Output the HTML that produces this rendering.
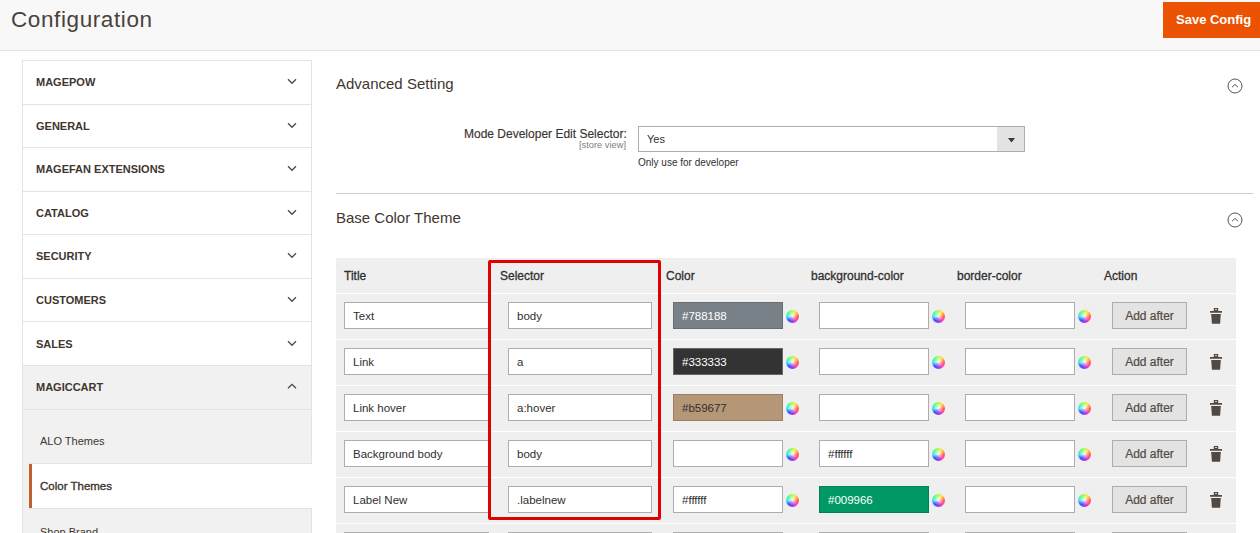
<!DOCTYPE html>
<html><head><meta charset="utf-8">
<style>
*{box-sizing:border-box;margin:0;padding:0}
html,body{width:1260px;height:533px;overflow:hidden;background:#fff;font-family:"Liberation Sans",sans-serif;color:#41362f}
body{position:relative}
.a{position:absolute;white-space:nowrap}
#hdr{left:0;top:0;width:1260px;height:51px;background:#f8f8f8;border-bottom:1px solid #e3e3e3}
#ttl{left:11px;top:6px;font-size:22.5px;line-height:28px;color:#4a423c;letter-spacing:0.6px}
#save{left:1163px;top:2px;width:110px;height:36px;background:#eb5202;color:#fff;font-weight:bold;font-size:13px;line-height:36px;padding-left:13px}
#side{left:22px;top:60px;width:290px;height:480px;border:1px solid #e3e3e3;border-bottom:none}
.sep{height:1px;background:#e3e3e3}
.st{left:36px;font-weight:bold;font-size:11px;line-height:12px;color:#41362f}
.sub{left:40px;font-size:11px;line-height:12px;color:#41362f}
.h2{left:336px;font-size:15px;line-height:18px;color:#41362f}
.inp{background:#fff;border:1px solid #adadad;height:27px;font-size:11.5px;line-height:27px;padding-left:8px;color:#303030;overflow:hidden}
.wh{width:13px;height:13px;border-radius:50%;background:radial-gradient(circle at 50% 45%,rgba(255,255,255,.9) 0,rgba(255,255,255,0) 55%,rgba(0,0,0,0) 72%,rgba(70,0,70,.35) 100%),conic-gradient(#a8ff40,#ffe040 30deg,#ff6040 90deg,#ff40c0 135deg,#9040e0 180deg,#4050ff 225deg,#40e0ff 270deg,#40ff80 315deg,#a8ff40 360deg)}
.th{font-weight:normal;-webkit-text-stroke:0.3px #303030;font-size:12px;line-height:12px;color:#303030}
.btn{width:75px;height:27px;background:#e3e3e3;border:1px solid #adadad;font-size:12px;line-height:27px;text-align:center;color:#514943;-webkit-text-stroke:0.2px #514943}
</style></head><body>
<div id="hdr" class="a"></div>
<div id="ttl" class="a">Configuration</div>
<div id="save" class="a">Save Config</div>
<div id="side" class="a"></div>
<div class="a" style="left:23px;top:366px;width:288px;height:200px;background:#f1f1f1"></div>
<div class="a sep" style="left:23px;top:104px;width:288px"></div>
<div class="a sep" style="left:23px;top:147px;width:288px"></div>
<div class="a sep" style="left:23px;top:191px;width:288px"></div>
<div class="a sep" style="left:23px;top:234px;width:288px"></div>
<div class="a sep" style="left:23px;top:278px;width:288px"></div>
<div class="a sep" style="left:23px;top:321px;width:288px"></div>
<div class="a sep" style="left:23px;top:365px;width:288px"></div>
<div class="a st" style="top:76px">MAGEPOW</div>
<svg class="a" style="left:287px;top:78px" width="10" height="7" viewBox="0 0 10 7"><path d="M1 1.3 L5 5.3 L9 1.3" fill="none" stroke="#514943" stroke-width="1.3"/></svg>
<div class="a st" style="top:120px">GENERAL</div>
<svg class="a" style="left:287px;top:122px" width="10" height="7" viewBox="0 0 10 7"><path d="M1 1.3 L5 5.3 L9 1.3" fill="none" stroke="#514943" stroke-width="1.3"/></svg>
<div class="a st" style="top:163px">MAGEFAN EXTENSIONS</div>
<svg class="a" style="left:287px;top:165px" width="10" height="7" viewBox="0 0 10 7"><path d="M1 1.3 L5 5.3 L9 1.3" fill="none" stroke="#514943" stroke-width="1.3"/></svg>
<div class="a st" style="top:207px">CATALOG</div>
<svg class="a" style="left:287px;top:209px" width="10" height="7" viewBox="0 0 10 7"><path d="M1 1.3 L5 5.3 L9 1.3" fill="none" stroke="#514943" stroke-width="1.3"/></svg>
<div class="a st" style="top:250px">SECURITY</div>
<svg class="a" style="left:287px;top:252px" width="10" height="7" viewBox="0 0 10 7"><path d="M1 1.3 L5 5.3 L9 1.3" fill="none" stroke="#514943" stroke-width="1.3"/></svg>
<div class="a st" style="top:294px">CUSTOMERS</div>
<svg class="a" style="left:287px;top:296px" width="10" height="7" viewBox="0 0 10 7"><path d="M1 1.3 L5 5.3 L9 1.3" fill="none" stroke="#514943" stroke-width="1.3"/></svg>
<div class="a st" style="top:338px">SALES</div>
<svg class="a" style="left:287px;top:340px" width="10" height="7" viewBox="0 0 10 7"><path d="M1 1.3 L5 5.3 L9 1.3" fill="none" stroke="#514943" stroke-width="1.3"/></svg>
<div class="a st" style="top:381px">MAGICCART</div>
<svg class="a" style="left:287px;top:383px" width="10" height="7" viewBox="0 0 10 7"><path d="M1 5.3 L5 1.3 L9 5.3" fill="none" stroke="#514943" stroke-width="1.3"/></svg>
<div class="a sep" style="left:24px;top:409px;width:287px"></div>
<div class="a sub" style="top:435px">ALO Themes</div>
<div class="a sep" style="left:29px;top:463px;width:282px"></div>
<div class="a" style="left:29px;top:464px;width:283px;height:44px;background:#fff;border-left:3px solid #c0602e"></div>
<div class="a sub" style="top:480px;-webkit-text-stroke:0.35px #41362f;font-size:11.5px">Color Themes</div>
<div class="a sep" style="left:29px;top:508px;width:282px"></div>
<div class="a sub" style="top:526px">Shop Brand</div>
<div class="a h2" style="top:75px">Advanced Setting</div>
<svg class="a" style="left:1227px;top:78px" width="16" height="16" viewBox="0 0 16 16"><circle cx="8" cy="8" r="7" fill="none" stroke="#555" stroke-width="1"/><path d="M5 9.2 L8 6.4 L11 9.2" fill="none" stroke="#555" stroke-width="1"/></svg>
<div class="a lbl" style="left:464px;top:127px;width:162px;text-align:right;font-size:12px;line-height:14px;color:#3a3330;-webkit-text-stroke:0.15px #3a3330">Mode Developer Edit Selector:</div>
<div class="a" style="left:560px;top:140px;width:66px;text-align:right;font-size:9.3px;line-height:10px;color:#808080">[store view]</div>
<div class="a" style="left:638px;top:126px;width:387px;height:26px;border:1px solid #adadad;background:#fff"></div>
<div class="a" style="left:997px;top:127px;width:27px;height:24px;background:#e3e3e3"></div>
<svg class="a" style="left:1008px;top:138px" width="8" height="5" viewBox="0 0 8 5"><path d="M0 0 L7 0 L3.5 4.6 Z" fill="#41362f"/></svg>
<div class="a" style="left:647px;top:132px;font-size:11px;line-height:14px;color:#303030">Yes</div>
<div class="a" style="left:638px;top:157px;font-size:10px;line-height:12px;color:#303030">Only use for developer</div>
<div class="a" style="left:336px;top:193px;width:917px;height:1px;background:#cccccc"></div>
<div class="a h2" style="top:209px">Base Color Theme</div>
<svg class="a" style="left:1227px;top:212px" width="16" height="16" viewBox="0 0 16 16"><circle cx="8" cy="8" r="7" fill="none" stroke="#555" stroke-width="1"/><path d="M5 9.2 L8 6.4 L11 9.2" fill="none" stroke="#555" stroke-width="1"/></svg>
<div class="a" style="left:336px;top:258px;width:900px;height:290px;background:#efefef"></div>
<div class="a th" style="left:344px;top:270px">Title</div>
<div class="a th" style="left:500px;top:270px">Selector</div>
<div class="a th" style="left:666px;top:270px">Color</div>
<div class="a th" style="left:811px;top:270px">background-color</div>
<div class="a th" style="left:957px;top:270px">border-color</div>
<div class="a th" style="left:1104px;top:270px">Action</div>
<div class="a" style="left:336px;top:293px;width:900px;height:1px;background:#fff"></div>
<div class="a inp" style="left:344px;top:302px;width:145px">Text</div>
<div class="a inp" style="left:508px;top:302px;width:144px">body</div>
<div class="a inp" style="left:673px;top:302px;width:110px;background:#788188;color:#fff;border-color:rgba(0,0,0,.15)">#788188</div>
<div class="a wh" style="left:786px;top:310px"></div>
<div class="a inp" style="left:819px;top:302px;width:110px"></div>
<div class="a wh" style="left:932px;top:310px"></div>
<div class="a inp" style="left:965px;top:302px;width:110px"></div>
<div class="a wh" style="left:1078px;top:310px"></div>
<div class="a btn" style="left:1112px;top:302px">Add after</div>
<svg class="a" style="left:1210px;top:308px" width="12" height="16" viewBox="0 0 12 16"><path d="M3.8 0 H8.2 V3 H12 V4.8 H0 V3 H3.8 Z M5.2 1 V2 H6.8 V1 Z" fill="#514943" fill-rule="evenodd"/><path d="M1.2 6 H10.8 L10.1 15.8 H1.9 Z" fill="#514943"/></svg>
<div class="a" style="left:336px;top:339px;width:900px;height:1px;background:#fff"></div>
<div class="a inp" style="left:344px;top:348px;width:145px">Link</div>
<div class="a inp" style="left:508px;top:348px;width:144px">a</div>
<div class="a inp" style="left:673px;top:348px;width:110px;background:#333333;color:#fff;border-color:#666">#333333</div>
<div class="a wh" style="left:786px;top:356px"></div>
<div class="a inp" style="left:819px;top:348px;width:110px"></div>
<div class="a wh" style="left:932px;top:356px"></div>
<div class="a inp" style="left:965px;top:348px;width:110px"></div>
<div class="a wh" style="left:1078px;top:356px"></div>
<div class="a btn" style="left:1112px;top:348px">Add after</div>
<svg class="a" style="left:1210px;top:354px" width="12" height="16" viewBox="0 0 12 16"><path d="M3.8 0 H8.2 V3 H12 V4.8 H0 V3 H3.8 Z M5.2 1 V2 H6.8 V1 Z" fill="#514943" fill-rule="evenodd"/><path d="M1.2 6 H10.8 L10.1 15.8 H1.9 Z" fill="#514943"/></svg>
<div class="a" style="left:336px;top:385px;width:900px;height:1px;background:#fff"></div>
<div class="a inp" style="left:344px;top:394px;width:145px">Link hover</div>
<div class="a inp" style="left:508px;top:394px;width:144px">a:hover</div>
<div class="a inp" style="left:673px;top:394px;width:110px;background:#b59677;color:#303030;border-color:rgba(0,0,0,.15)">#b59677</div>
<div class="a wh" style="left:786px;top:402px"></div>
<div class="a inp" style="left:819px;top:394px;width:110px"></div>
<div class="a wh" style="left:932px;top:402px"></div>
<div class="a inp" style="left:965px;top:394px;width:110px"></div>
<div class="a wh" style="left:1078px;top:402px"></div>
<div class="a btn" style="left:1112px;top:394px">Add after</div>
<svg class="a" style="left:1210px;top:400px" width="12" height="16" viewBox="0 0 12 16"><path d="M3.8 0 H8.2 V3 H12 V4.8 H0 V3 H3.8 Z M5.2 1 V2 H6.8 V1 Z" fill="#514943" fill-rule="evenodd"/><path d="M1.2 6 H10.8 L10.1 15.8 H1.9 Z" fill="#514943"/></svg>
<div class="a" style="left:336px;top:431px;width:900px;height:1px;background:#fff"></div>
<div class="a inp" style="left:344px;top:440px;width:145px">Background body</div>
<div class="a inp" style="left:508px;top:440px;width:144px">body</div>
<div class="a inp" style="left:673px;top:440px;width:110px"></div>
<div class="a wh" style="left:786px;top:448px"></div>
<div class="a inp" style="left:819px;top:440px;width:110px;background:#fff;color:#303030;border-color:#adadad">#ffffff</div>
<div class="a wh" style="left:932px;top:448px"></div>
<div class="a inp" style="left:965px;top:440px;width:110px"></div>
<div class="a wh" style="left:1078px;top:448px"></div>
<div class="a btn" style="left:1112px;top:440px">Add after</div>
<svg class="a" style="left:1210px;top:446px" width="12" height="16" viewBox="0 0 12 16"><path d="M3.8 0 H8.2 V3 H12 V4.8 H0 V3 H3.8 Z M5.2 1 V2 H6.8 V1 Z" fill="#514943" fill-rule="evenodd"/><path d="M1.2 6 H10.8 L10.1 15.8 H1.9 Z" fill="#514943"/></svg>
<div class="a" style="left:336px;top:477px;width:900px;height:1px;background:#fff"></div>
<div class="a inp" style="left:344px;top:486px;width:145px">Label New</div>
<div class="a inp" style="left:508px;top:486px;width:144px">.labelnew</div>
<div class="a inp" style="left:673px;top:486px;width:110px;background:#fff;color:#303030;border-color:#adadad">#ffffff</div>
<div class="a wh" style="left:786px;top:494px"></div>
<div class="a inp" style="left:819px;top:486px;width:110px;background:#009966;color:#fff;border-color:rgba(0,0,0,.15)">#009966</div>
<div class="a wh" style="left:932px;top:494px"></div>
<div class="a inp" style="left:965px;top:486px;width:110px"></div>
<div class="a wh" style="left:1078px;top:494px"></div>
<div class="a btn" style="left:1112px;top:486px">Add after</div>
<svg class="a" style="left:1210px;top:492px" width="12" height="16" viewBox="0 0 12 16"><path d="M3.8 0 H8.2 V3 H12 V4.8 H0 V3 H3.8 Z M5.2 1 V2 H6.8 V1 Z" fill="#514943" fill-rule="evenodd"/><path d="M1.2 6 H10.8 L10.1 15.8 H1.9 Z" fill="#514943"/></svg>
<div class="a" style="left:336px;top:523px;width:900px;height:1px;background:#fff"></div>
<div class="a inp" style="left:344px;top:532px;width:145px"></div>
<div class="a inp" style="left:508px;top:532px;width:144px"></div>
<div class="a inp" style="left:673px;top:532px;width:110px"></div>
<div class="a wh" style="left:786px;top:540px"></div>
<div class="a inp" style="left:819px;top:532px;width:110px"></div>
<div class="a wh" style="left:932px;top:540px"></div>
<div class="a inp" style="left:965px;top:532px;width:110px"></div>
<div class="a wh" style="left:1078px;top:540px"></div>
<div class="a btn" style="left:1112px;top:532px">Add after</div>
<svg class="a" style="left:1210px;top:538px" width="12" height="16" viewBox="0 0 12 16"><path d="M3.8 0 H8.2 V3 H12 V4.8 H0 V3 H3.8 Z M5.2 1 V2 H6.8 V1 Z" fill="#514943" fill-rule="evenodd"/><path d="M1.2 6 H10.8 L10.1 15.8 H1.9 Z" fill="#514943"/></svg>
<div class="a" style="left:488px;top:260px;width:173px;height:260px;border:3px solid #e00000;border-radius:2px"></div>
</body></html>
